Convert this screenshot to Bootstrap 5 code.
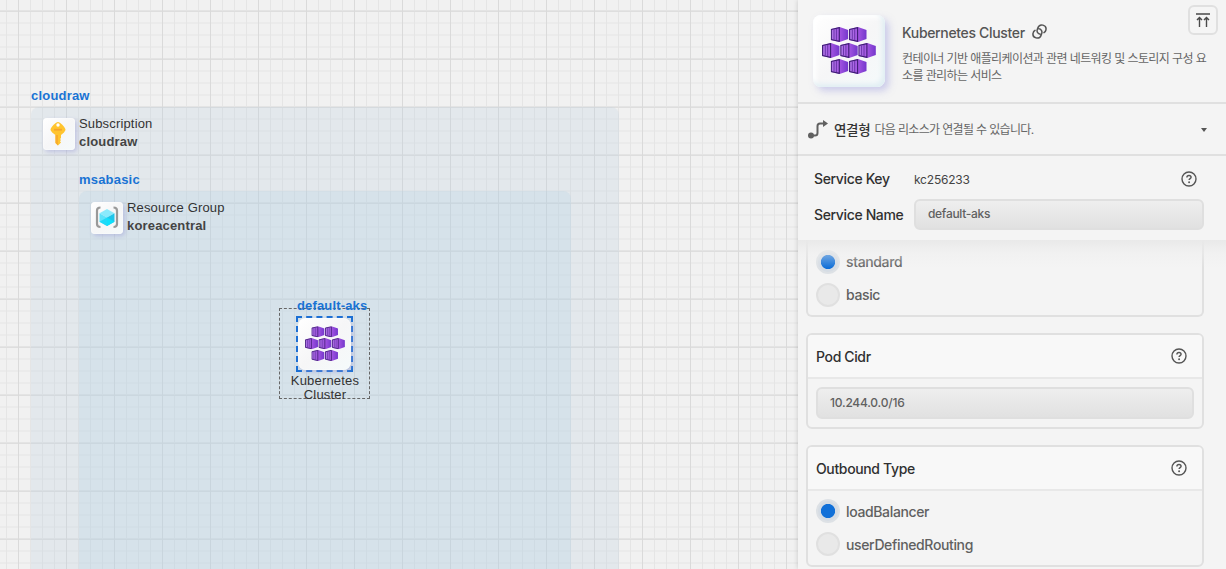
<!DOCTYPE html>
<html lang="ko">
<head>
<meta charset="utf-8">
<meta name="viewport" content="width=device-width, initial-scale=1">
<title>Kubernetes Cluster</title>
<link href="https://cdn.jsdelivr.net/npm/bootstrap@5.3.0/dist/css/bootstrap.min.css" rel="stylesheet">
<style>
  body { font-family: Inter, "Noto Sans CJK KR", sans-serif; background: #f1f1f1; color: #303030; }
  .board {
    background-color: #f1f1f1;
    background-image:
      linear-gradient(90deg, #dadada 1px, transparent 1px),
      linear-gradient(#e4e4e4 1px, #dedede 1px, #dedede 2px, transparent 2px),
      linear-gradient(90deg, #e5e5e5 1px, transparent 1px),
      linear-gradient(#ebebeb 2px, transparent 2px);
    background-size: 48px 48px, 48px 48px, 12px 12px, 12px 12px;
    background-position: 18px 0, 0 10px, 6px 0, 0 10px;
    font-family: "Liberation Sans", Arial, sans-serif; font-size: 13px; line-height: 18px;
  }
  .zone { border-radius: 8px 8px 0 0; bottom: 0; }
  .zone-sub { left: 31px; top: 107px; width: 588px; background: rgba(187,208,222,.25); }
  .zone-rg { left: 79px; top: 191px; width: 492px; background: rgba(176,207,226,.25); }
  .zone-title { top: -20px; left: 0; color: #1a73d4; letter-spacing: .2px; }
  .zone-head { padding: 8px 0 0 12px; gap: 4px; letter-spacing: .16px; color: #333; }
  .zone-head b { color: #444; letter-spacing: .17px; }
  .tile { background: linear-gradient(135deg, #fff, #f6f6f7 50%, #f5fafb); box-shadow: 2px 2px 4px rgba(150,150,210,.45), inset 0 0 2px #fff; flex: none; }
  .tile-s { width: 32px; height: 32px; border-radius: 4px; margin-top: 3px; }
  .aks { left: 279px; top: 308px; width: 91px; height: 91px; border: 1px dashed #666; line-height: 14px; color: #333; }
  .aks-title { left: 17px; top: -10px; color: #1a73d4; letter-spacing: .15px; }
  .aks-frame { left: 16px; top: 7px; width: 57px; height: 56px; border: 2px dashed #1a6fd4; }
  .aks-tile { width: 53px; height: 52px; border-radius: 8px; }
  .aks-name { left: 0; right: -1px; top: 65px; letter-spacing: .18px; }
  .panel { width: 428px; background: #f4f4f4; box-shadow: 0 0 5px rgba(0,0,0,.18); letter-spacing: -.36px; }
  .panel-head { height: 104px; border-bottom: 2px solid #e0e0e0; padding: 15px 16px 0 15px; gap: 17px; }
  .head-tile { width: 72px; height: 72px; border-radius: 8px; box-shadow: 4px 4px 7px rgba(165,165,225,.5), inset -3px -3px 5px #e0eef3, inset 3px 3px 5px #fff; }
  .head-title { font-size: 14px; line-height: 18px; color: #555; font-weight: 500; margin-top: 9px; letter-spacing: -.34px; gap: 7px; }
  .head-title svg { margin-top: -4px; }
  .head-text { font-size: 12px; line-height: 17px; color: #666; margin-top: 8px; letter-spacing: -.6px; }
  .pin-btn { right: 8px; top: 5px; width: 30px; height: 30px; border: 2px solid #e0e0e0; border-radius: 6px; background: #f5f5f5; }
  .link-row { height: 52px; border-bottom: 2px solid #e0e0e0; padding: 0 19px 0 10px; font-size: 12px; color: #666; letter-spacing: -.65px; gap: 4px; }
  .link-row b { font-size: 13.5px; font-weight: 500; color: #333; letter-spacing: -.3px; margin-left: 2px; }
  .link-row b, .link-row span { padding-top: 2px; }
  .caret { border: 3.5px solid transparent; border-top: 4px solid #555; border-bottom: 0; margin-top: 2px; }
  .fixed-form { height: 84px; padding: 7px 22px 0 16px; font-size: 14px; font-weight: 500; }
  .label-col { width: 100px; color: #303030; padding-bottom: 1px; }
  .key-text { font-size: 12px; font-weight: 400; color: #444; letter-spacing: -.2px; padding-top: 1px; }
  .key-row { height: 32px; padding-right: 7px; }
  .field { height: 31px; border: 2px solid #dfdfdf; border-radius: 6px; background: linear-gradient(#eee, #e1e1e1); font-size: 12px; font-weight: 500; color: #606060; padding: 0 12px 2px; letter-spacing: -.3px; }
  .field-tall { height: 32px; padding-bottom: 0; letter-spacing: -.22px; }
  .scroll-area { padding: 0 22px 0 8px; }
  .fade-top { top: 0; left: 0; right: 0; height: 28px; background: linear-gradient(#e9e9e9, rgba(238,238,238,.5) 45%, rgba(244,244,244,0)); }
  .opt-box { border: 2px solid #e0e0e0; border-radius: 6px; font-size: 14px; }
  .opt-first { border-top: 0; border-radius: 0 0 6px 6px; height: 77px; padding: 10px 8px 0; }
  .opt-head { height: 44px; border-bottom: 2px solid #e8e8e8; background: #f8f8f8; border-radius: 4px 4px 0 0; padding: 0 15px 0 8px; font-weight: 500; }
  .pick { gap: 6px; height: 24px; color: #606060; margin-bottom: 9px; font-weight: 500; }
  .opt-first .pick span { padding-bottom: 2px; }
  .dot { width: 24px; height: 24px; border: 2px solid #e0e0e0; border-radius: 50%; background: #e9e9e9; }
  .dot-on { background: radial-gradient(circle, #1170d8 6.7px, #d5dce4 7.5px); border-color: #dde1e5; }
</style>
</head>
<body class="vh-100 overflow-hidden">
<svg width="0" height="0" class="position-absolute">
  <defs>
    <linearGradient id="violet"><stop offset="0" stop-color="#b27be8"/><stop offset=".5" stop-color="#a455e2"/><stop offset="1" stop-color="#7437cc"/></linearGradient>
    <symbol id="pod" viewBox="0 0 18 15">
      <path d="M0 2 9 0l8.500 3v9L9 15l-9-2z" fill="url(#violet)"/>
      <path d="M.6 2.500 8.600.6v13.800L.6 12.500z" fill="none" stroke="#3d1d73" stroke-width="1.100"/><path d="M3.300 2.500v10M5.700 2v11" stroke="#5a2a9c" stroke-width=".8"/>
    </symbol>
    <symbol id="cluster" viewBox="0 0 54 48">
      <use href="#pod" x="8.7" y="0" width="18" height="15"/><use href="#pod" x="27" y="0" width="18" height="15"/>
      <use href="#pod" x="0" y="16" width="18" height="15"/><use href="#pod" x="18.2" y="16" width="18" height="15"/><use href="#pod" x="36.3" y="16" width="18" height="15"/>
      <use href="#pod" x="8.7" y="32" width="18" height="15"/><use href="#pod" x="27" y="32" width="18" height="15"/>
    </symbol>
    <symbol id="help" viewBox="0 0 16 16">
      <circle cx="8" cy="8" r="7" fill="none" stroke="#555" stroke-width="1.4"/>
      <path d="M5.900 6.400C5.900 5.100 6.800 4.500 8 4.500s2.100.7 2.100 1.800c0 1.300-2 1.400-2 2.800" fill="none" stroke="#555" stroke-width="1.400"/><circle cx="8.1" cy="11.200" r=".95" fill="#555"/>
    </symbol>
  </defs>
</svg>
<div class="d-flex h-100">
  <main class="board flex-grow-1 position-relative overflow-hidden">
    <section class="zone zone-sub position-absolute">
      <b class="zone-title position-absolute">cloudraw</b>
      <div class="zone-head d-flex">
        <div class="tile tile-s d-flex align-items-center justify-content-center">
          <svg width="18" height="26" viewBox="0 0 18 26"><path d="M8 1c2 0 7 5 7.500 7.500 0 2-3 4.500-4.500 5.500v3l-1 1 1 1-1 1.300 1 1.200L8 24.500 5.500 22v-8C4 13 .5 10.500.5 8.500 1 6 6 1 8 1z" fill="#ffc42e"/><path d="M8 24.500 5.500 22v-8H8z" fill="#f9ad2b"/><path d="M4 8.700h8" stroke="#f5a42a" stroke-width="1.800"/><circle cx="8" cy="4" r="1.700" fill="#fff"/></svg>
        </div>
        <div class="d-flex flex-column"><span>Subscription</span><b>cloudraw</b></div>
      </div>
    </section>
    <section class="zone zone-rg position-absolute">
      <b class="zone-title position-absolute">msabasic</b>
      <div class="zone-head d-flex">
        <div class="tile tile-s d-flex align-items-center justify-content-center">
          <svg width="24" height="24" viewBox="0 0 24 24"><path d="M5.500 1.500Q2 1.500 2 4.500v13.500q0 3 3.500 3M18.500 1.500Q22 1.500 22 4.500v13.500q0 3-3.500 3" fill="none" stroke="#999" stroke-width="2.200"/><path d="m12 3 7.500 4.200L12 11.500 4.500 7.200z" fill="#8aeafc"/><path d="M4.500 7.200 12 11.500V20l-7.500-4.200z" fill="#5fe2fa"/><path d="M19.500 7.200 12 11.500V20l7.500-4.200z" fill="#1fc5ea"/><path d="m12 11.500-7.500 4.300L12 20z" fill="#1edaf8"/><path d="m12 11.500 7.500 4.300L12 20z" fill="#0ee0fb"/></svg>
        </div>
        <div class="d-flex flex-column"><span>Resource Group</span><b>koreacentral</b></div>
      </div>
    </section>
    <section class="aks position-absolute">
      <div class="aks-frame position-absolute"><div class="aks-tile tile d-flex align-items-center justify-content-center"><svg width="40" height="36"><use href="#cluster"/></svg></div></div>
      <b class="aks-title position-absolute text-nowrap">default-aks</b>
      <div class="aks-name position-absolute text-center">Kubernetes Cluster</div>
    </section>
  </main>

  <aside class="panel flex-shrink-0 position-relative d-flex flex-column">
    <header class="panel-head d-flex flex-shrink-0">
      <div class="tile head-tile d-flex align-items-center justify-content-center"><svg width="54" height="48"><use href="#cluster"/></svg></div>
      <div>
        <div class="head-title d-flex align-items-center">Kubernetes Cluster
          <svg width="15" height="15" viewBox="0 0 15 15" fill="none" stroke="#555" stroke-width="1.500" stroke-linecap="round"><path d="M8.300 10.200C5.900 10 4.500 7.800 5.300 5.500l.5-1.400C6.600 1.700 8.700.5 10.900 1.100s3.500 2.700 3 4.900c-.2 1.100-.9 2-1.900 2.600"/><path d="M6.700 4.800c2.400.2 3.800 2.400 3 4.700l-.5 1.400c-.8 2.400-2.900 3.600-5.100 3S.600 11.200 1.100 9c.2-1.100.9-2 1.900-2.600"/></svg>
        </div>
        <div class="head-text text-nowrap">컨테이너 기반 애플리케이션과 관련 네트워킹 및 스토리지 구성 요<br>소를 관리하는 서비스</div>
      </div>
      <button class="pin-btn position-absolute p-0 d-flex align-items-center justify-content-center" aria-label="top">
        <svg width="14" height="14" viewBox="0 0 14 14" fill="none" stroke="#4a4a4a" stroke-width="1.400"><path d="M0 1h14M3.500 14V4.500M1 7l2.500-2.600L6 7M10.500 14V4.500M8 7l2.500-2.600L13 7"/></svg>
      </button>
    </header>
    <div class="link-row d-flex align-items-center flex-shrink-0">
      <svg width="20" height="19" viewBox="0 0 20 19"><circle cx="3" cy="15.500" r="3" fill="#606060"/><path d="M3 15.500h4q2.500 0 2.500-2.500V6q0-2.500 2.500-2.500h4" fill="none" stroke="#606060" stroke-width="2"/><path d="M15 0v7l5-3.500z" fill="#606060"/></svg>
      <b>연결형</b><span>다음 리소스가 연결될 수 있습니다.</span><i class="caret ms-auto"></i>
    </div>
    <div class="fixed-form flex-shrink-0">
      <div class="key-row d-flex align-items-center"><span class="label-col">Service Key</span><span class="key-text">kc256233</span><svg class="ms-auto" width="16" height="16"><use href="#help"/></svg></div>
      <div class="d-flex align-items-center mt-1"><span class="label-col flex-shrink-0">Service Name</span><div class="field flex-grow-1 d-flex align-items-center">default-aks</div></div>
    </div>
    <div class="scroll-area flex-grow-1 position-relative overflow-hidden">
      <div class="opt-box opt-first">
        <div class="pick d-flex align-items-center"><i class="dot dot-on"></i><span>standard</span></div>
        <div class="pick d-flex align-items-center"><i class="dot"></i><span>basic</span></div>
      </div>
      <div class="opt-box mt-3">
        <div class="opt-head d-flex align-items-center justify-content-between"><span>Pod Cidr</span><svg width="16" height="16"><use href="#help"/></svg></div>
        <div class="p-2"><div class="field field-tall d-flex align-items-center">10.244.0.0/16</div></div>
      </div>
      <div class="opt-box mt-3">
        <div class="opt-head d-flex align-items-center justify-content-between"><span>Outbound Type</span><svg width="16" height="16"><use href="#help"/></svg></div>
        <div class="px-2 pt-2">
          <div class="pick d-flex align-items-center"><i class="dot dot-on"></i><span>loadBalancer</span></div>
          <div class="pick d-flex align-items-center"><i class="dot"></i><span>userDefinedRouting</span></div>
        </div>
      </div>
      <div class="fade-top position-absolute"></div>
    </div>
  </aside>
</div>
<script src="https://cdn.jsdelivr.net/npm/bootstrap@5.3.0/dist/js/bootstrap.bundle.min.js"></script>
</body>
</html>
